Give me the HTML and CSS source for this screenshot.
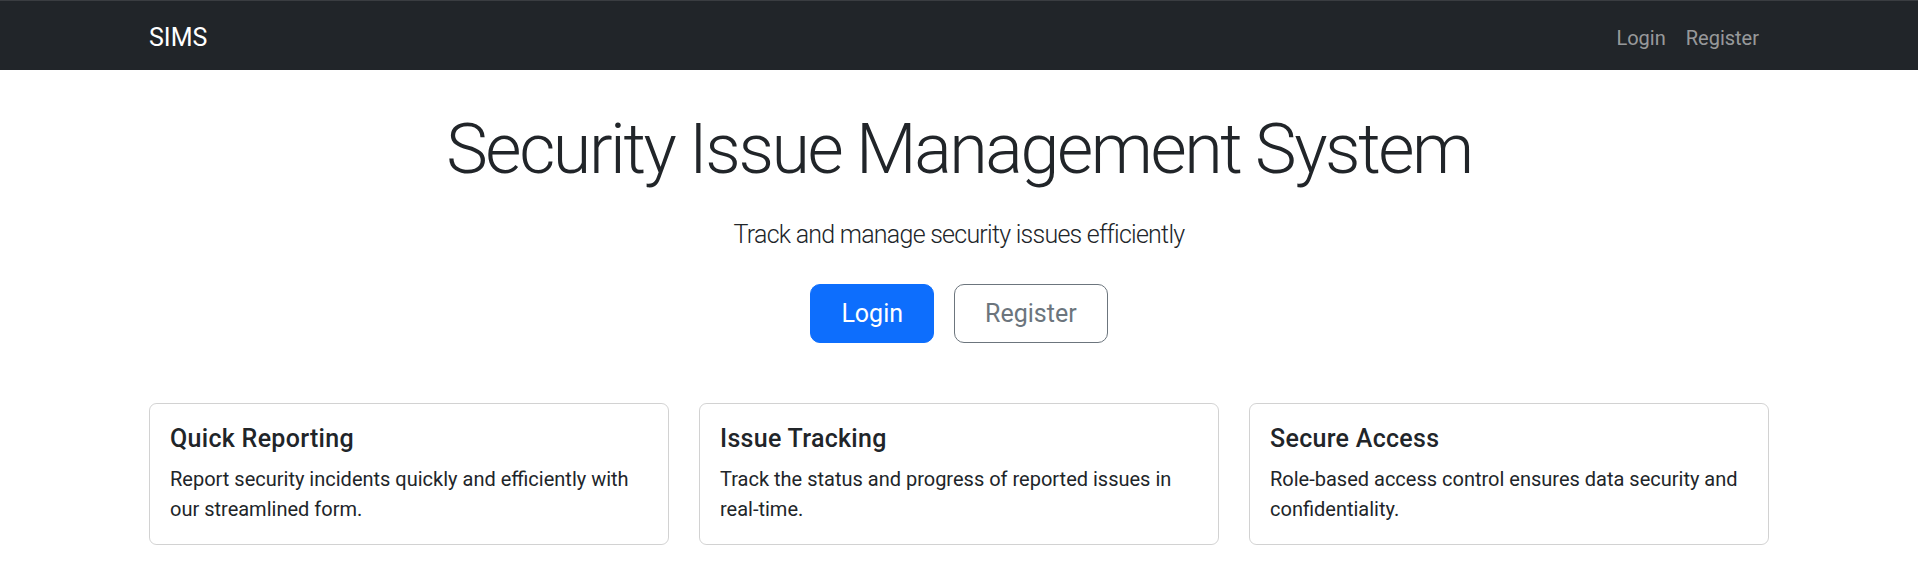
FILE: index.html
```html
<!DOCTYPE html>
<html lang="en">
<head>
<meta charset="utf-8">
<title>SIMS</title>
<link rel="stylesheet" href="styles.css">
</head>
<body>
<nav class="navbar">
  <div class="container nav-inner">
    <a class="brand" href="#">SIMS</a>
    <ul class="nav-links">
      <li><a class="nav-link" href="#">Login</a></li>
      <li><a class="nav-link" href="#">Register</a></li>
    </ul>
  </div>
</nav>
<main class="container hero">
  <h1 class="title">Security Issue Management System</h1>
  <p class="lead">Track and manage security issues efficiently</p>
  <div class="actions">
    <a class="btn btn-primary" href="#">Login</a>
    <a class="btn btn-outline" href="#">Register</a>
  </div>
  <div class="features">
    <div class="card">
      <h5 class="card-title">Quick Reporting</h5>
      <p class="card-text">Report security incidents quickly and efficiently with our streamlined form.</p>
    </div>
    <div class="card">
      <h5 class="card-title">Issue Tracking</h5>
      <p class="card-text">Track the status and progress of reported issues in real-time.</p>
    </div>
    <div class="card">
      <h5 class="card-title">Secure Access</h5>
      <p class="card-text">Role-based access control ensures data security and confidentiality.</p>
    </div>
  </div>
</main>
</body>
</html>
```
FILE: styles.css
```css
* { box-sizing: border-box; }
html, body {
  margin: 0;
  padding: 0;
  background: #fff;
  color: #212529;
  font-family: Roboto, "Liberation Sans", sans-serif;
  font-size: 20px;
  line-height: 30px;
}
a { text-decoration: none; }
.container {
  width: 1650px;
  margin: 0 auto;
  padding: 0 15px;
}
.navbar {
  background: #212529;
  height: 70px;
  border-top: 1px solid #3a3d41;
}
.nav-inner {
  height: 69px;
  padding-top: 4px;
  display: flex;
  align-items: center;
  justify-content: space-between;
}
.brand {
  color: #fff;
  font-size: 25px;
  line-height: 37px;
}
.nav-links {
  list-style: none;
  margin: 0;
  padding: 0;
  display: flex;
}
.nav-link {
  display: block;
  padding: 10px 10px;
  color: rgba(255, 255, 255, 0.55);
  font-size: 20px;
  line-height: 30px;
}
.hero { text-align: center; }
.title {
  margin: 37px 0 25px;
  font-size: 70px;
  font-weight: 300;
  line-height: 84px;
  letter-spacing: -2.4px;
}
.lead {
  margin: 0 0 30px;
  font-size: 25px;
  font-weight: 300;
  line-height: 37.5px;
  letter-spacing: -0.75px;
}
.actions {
  display: flex;
  justify-content: center;
  gap: 20px;
}
.btn {
  display: inline-block;
  padding: 10px 30px;
  font-size: 25px;
  line-height: 37.5px;
  border-radius: 10px;
  border: 1px solid transparent;
}
.btn-primary {
  background: #0d6efd;
  border-color: #0d6efd;
  color: #fff;
}
.btn-outline {
  border-color: #6c757d;
  color: #6c757d;
  background: #fff;
}
.features {
  margin-top: 60px;
  display: grid;
  grid-template-columns: repeat(3, 1fr);
  gap: 30px;
  text-align: left;
}
.card {
  border: 1px solid rgba(0, 0, 0, 0.175);
  border-radius: 7.5px;
  padding: 20px;
}
.card-title {
  margin: 0 0 10px;
  font-size: 25px;
  font-weight: 500;
  line-height: 30px;
  letter-spacing: 0.3px;
}
.card-text {
  margin: 0;
}
```
